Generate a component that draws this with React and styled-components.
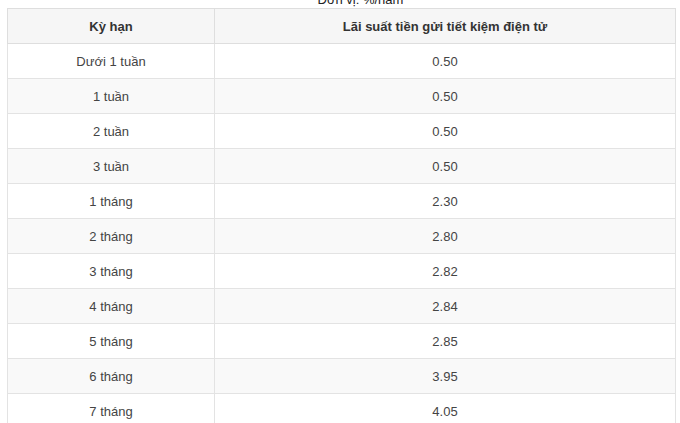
import React from 'react'
import styled, {createGlobalStyle} from 'styled-components'

const GlobalStyle = createGlobalStyle`
  html, body {
    margin: 0;
    padding: 0;
    background: #fff;
  }
  body {
    font-family: "Liberation Sans", Arial, sans-serif;
    color: #333;
  }
`

const Page = styled.div`
  width: 680px;
  height: 423px;
  overflow: hidden;
  padding: 0 4px 0 7px;
  box-sizing: border-box;
`

const Caption = styled.div`
  height: 8px;
  display: flex;
  justify-content: center;
  align-items: flex-end;
  padding-left: 38px;
  width: 669px;
  box-sizing: border-box;
  font-size: 13px;
  color: #222;
  & span {
    line-height: 14px;
    white-space: nowrap;
    transform: translateY(-1px);
  }
`

const Table = styled.table`
  width: 669px;
  border-collapse: collapse;
  table-layout: fixed;
  font-size: 13px;
`

const HeadCell = styled.th`
  height: 34px;
  padding: 0;
  border: 1px solid #dedede;
  background: #f6f6f6;
  font-weight: bold;
  color: #333;
  text-align: center;
  vertical-align: middle;
`

const Row = styled.tr`
  background: ${({$striped}) => ($striped ? '#f9f9f9' : '#fff')};
`

const Cell = styled.td`
  height: 34px;
  padding: 0;
  border: 1px solid #e3e3e3;
  color: #444;
  text-align: center;
  vertical-align: middle;
`

const rates = [
  ['Dưới 1 tuần', '0.50'],
  ['1 tuần', '0.50'],
  ['2 tuần', '0.50'],
  ['3 tuần', '0.50'],
  ['1 tháng', '2.30'],
  ['2 tháng', '2.80'],
  ['3 tháng', '2.82'],
  ['4 tháng', '2.84'],
  ['5 tháng', '2.85'],
  ['6 tháng', '3.95'],
  ['7 tháng', '4.05'],
]

export default function App() {
  return (
    <Page>
      <GlobalStyle />
      <Caption>
        <span>Đơn vị: %/năm</span>
      </Caption>
      <Table>
        <colgroup>
          <col style={{width: 207}} />
          <col />
        </colgroup>
        <thead>
          <tr>
            <HeadCell>Kỳ hạn</HeadCell>
            <HeadCell>Lãi suất tiền gửi tiết kiệm điện tử</HeadCell>
          </tr>
        </thead>
        <tbody>
          {rates.map(([term, rate], i) => (
            <Row key={term} $striped={i % 2 === 1}>
              <Cell>{term}</Cell>
              <Cell>{rate}</Cell>
            </Row>
          ))}
        </tbody>
      </Table>
    </Page>
  )
}
